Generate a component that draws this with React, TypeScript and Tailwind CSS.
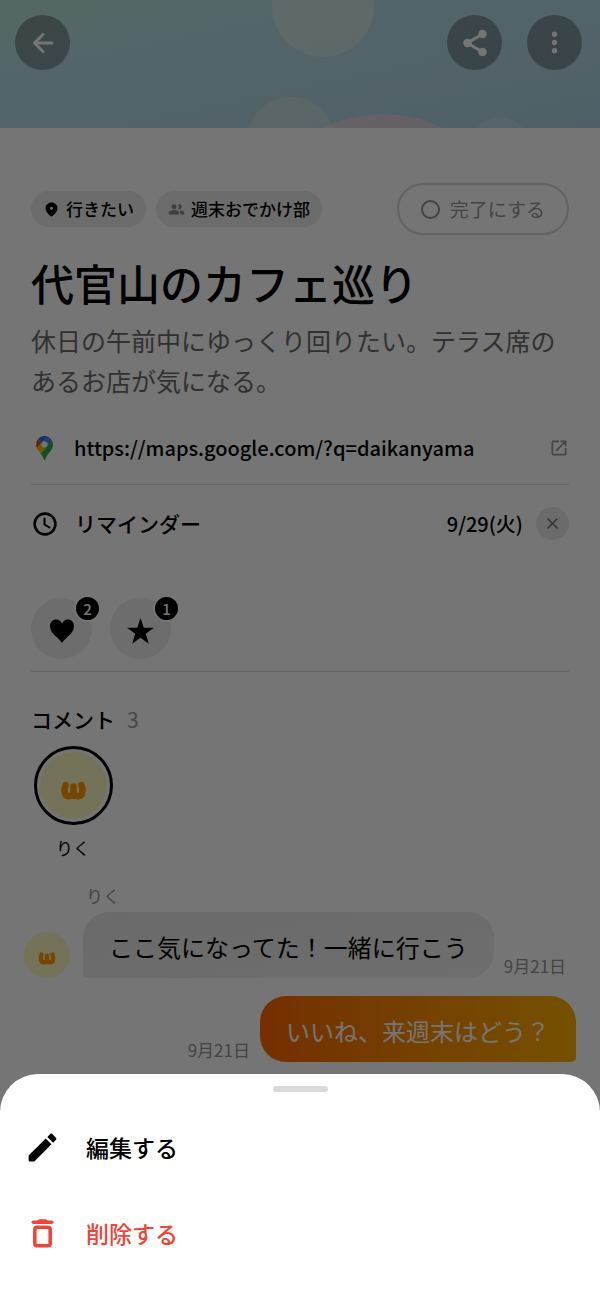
import { ReactNode } from "react";
import { MdClose, MdMoreVert, MdOpenInNew } from "react-icons/md";

const URL = "https://maps.google.com/?q=daikanyama";

function CircleButton({ label, children }: { label: string; children: ReactNode }) {
  return (
    <button
      aria-label={label}
      className="flex size-[55px] items-center justify-center rounded-full bg-black/30 text-white"
    >
      {children}
    </button>
  );
}

function ShareIcon() {
  return (
    <svg width="30" height="30" viewBox="0 0 30 30" fill="currentColor" aria-hidden="true">
      <path d="M22.500 6L7.500 15l15 9" fill="none" stroke="currentColor" strokeWidth="3" />
      <circle cx="7.500" cy="15" r="4.300" />
      <circle cx="22.500" cy="6" r="4.300" />
      <circle cx="22.500" cy="24" r="4.300" />
    </svg>
  );
}

function Cover() {
  return (
    <header className="relative h-32 overflow-hidden bg-linear-to-br from-[#bae1d9] via-[#b7dde5] via-30% to-[#aed0e1]">
      <svg
        className="absolute inset-0 h-full w-full"
        viewBox="0 0 600 128"
        preserveAspectRatio="xMidYMid slice"
        aria-hidden="true"
      >
        <circle cx="323" cy="6" r="51" fill="#fff8e8" fillOpacity="0.3" />
        <circle cx="383" cy="249" r="135" fill="#ffd4dc" fillOpacity="0.55" />
        <circle cx="291" cy="141" r="44" fill="#fff8ec" fillOpacity="0.26" />
        <circle cx="500" cy="146" r="29" fill="#f4ecfa" fillOpacity="0.22" />
      </svg>
      <div className="relative flex items-center gap-[25px] pt-[15px] pr-[18px] pl-[15px]">
        <CircleButton label="戻る">
          <svg
            width="30"
            height="30"
            viewBox="0 0 30 30"
            fill="none"
            stroke="currentColor"
            strokeWidth="3"
            strokeLinecap="round"
            strokeLinejoin="round"
          >
            <path d="M24 15H7M15 6.5L6.5 15l8.500 8.500" />
          </svg>
        </CircleButton>
        <div className="flex-1" />
        <CircleButton label="共有">
          <ShareIcon />
        </CircleButton>
        <CircleButton label="メニュー">
          <MdMoreVert size={33} />
        </CircleButton>
      </div>
    </header>
  );
}

function Chip({ icon, children }: { icon: ReactNode; children: ReactNode }) {
  return (
    <span className="flex h-9 items-center gap-1.5 rounded-full bg-[#ebebeb] px-3 text-[17px] font-medium">
      {icon}
      {children}
    </span>
  );
}

function PlaceIcon() {
  return (
    <svg width="17" height="17" viewBox="0 0 24 24" fill="currentColor" aria-hidden="true">
      <path
        fillRule="evenodd"
        d="M12 2c-4.700 0-8.500 3.600-8.500 8.300 0 4.300 3.500 8 7.600 11.400.5.400 1.300.4 1.800 0 4.100-3.400 7.600-7.100 7.600-11.400C20.500 5.600 16.700 2 12 2zm0 6a2.200 2.200 0 1 1 0 4.400A2.200 2.200 0 0 1 12 8z"
      />
    </svg>
  );
}

function PeopleIcon() {
  return (
    <svg width="17" height="17" viewBox="0 0 24 24" fill="#8a8a8a" aria-hidden="true">
      <circle cx="8.500" cy="8" r="3.500" />
      <path d="M14.200 5a3.500 3.500 0 1 1 0 6 4.900 4.900 0 0 0 0-6z" />
      <path d="M1 16.500c0-2.400 4.500-3.700 7.500-3.700s7 1.300 7 3.700v1.500c0 .6-.4 1-1 1H2c-.6 0-1-.4-1-1z" />
      <path d="M16.300 13c2.700.3 6.700 1.500 6.700 3.500V18c0 .6-.4 1-1 1h-4.700v-2.500c0-1.500-.3-2.500-1-3.500z" />
    </svg>
  );
}

function ClockIcon() {
  return (
    <svg
      width="28"
      height="28"
      viewBox="0 0 28 28"
      fill="none"
      stroke="currentColor"
      strokeWidth="2.600"
      strokeLinecap="round"
      strokeLinejoin="round"
      aria-hidden="true"
    >
      <circle cx="14" cy="14" r="10.400" />
      <path d="M13.500 8.500v6l5 3" strokeWidth="2" />
    </svg>
  );
}

function MapsPin() {
  return (
    <svg width="17" height="24" viewBox="0 0 92.3 132.3" aria-hidden="true">
      <circle cx="46" cy="46" r="22" fill="#fff" />
      <path fill="#1a73e8" d="M60.2 2.2C55.8.8 51 0 46.1 0 32 0 19.3 6.4 10.8 16.5l21.8 18.3L60.2 2.2z" />
      <path fill="#ea4335" d="M10.8 16.5C4.1 24.5 0 34.9 0 46.1c0 8.7 1.7 15.7 4.6 22l28-33.3-21.8-18.3z" />
      <path
        fill="#4285f4"
        d="M46.2 28.5c9.8 0 17.7 7.9 17.7 17.7 0 4.3-1.6 8.3-4.2 11.4 0 0 13.9-16.6 27.5-32.7-5.600-10.8-15.3-19-27-22.7L32.6 34.8c3.3-3.8 8.1-6.3 13.6-6.3"
      />
      <path
        fill="#fbbc04"
        d="M46.2 63.8c-9.8 0-17.7-7.9-17.7-17.7 0-4.3 1.5-8.3 4.1-11.3l-28 33.3c4.8 10.6 12.8 19.2 21 29.9l34.1-40.5c-3.3 3.9-8.1 6.3-13.5 6.3"
      />
      <path
        fill="#34a853"
        d="M59.1 109.2c15.4-24.1 33.3-35 33.3-63 0-7.7-1.9-14.9-5.2-21.3L25.6 98c2.6 3.4 5.3 7.3 7.9 11.3 9.4 14.5 6.8 23.1 12.8 23.1s3.4-8.7 12.8-23.2"
      />
    </svg>
  );
}

// Riku's avatar mark, drawn on a square so it scales with the avatar
function RikuFace() {
  return (
    <svg className="h-full w-full rounded-full bg-[#fff9c4]" viewBox="0 0 67 67" aria-hidden="true">
      <path
        d="M25.600 33c-2 5-1.300 11.200 3.200 11.200 3 0 4.700-1.700 4.700-4.200v-5.500M33.500 40c0 2.500 1.700 4.200 4.700 4.200 4.500 0 5.200-6.200 3.200-11.200"
        fill="none"
        stroke="#ff9800"
        strokeWidth="6.500"
        strokeLinecap="round"
        strokeLinejoin="round"
      />
    </svg>
  );
}

function Reaction({ label, count, children }: { label: string; count: number; children: ReactNode }) {
  return (
    <button
      aria-label={label}
      className="relative flex size-[61px] items-center justify-center rounded-full bg-[#ededed]"
    >
      {children}
      <span className="absolute -top-[3px] -right-[9px] flex size-[27px] items-center justify-center rounded-full border-2 border-white bg-black text-[15px] leading-none font-medium text-white">
        {count}
      </span>
    </button>
  );
}

function ActionSheet() {
  return (
    <div
      role="dialog"
      aria-label="操作"
      className="fixed inset-x-0 bottom-0 rounded-t-[38px] bg-white pt-3 pb-6"
    >
      <div className="mx-auto mb-3 h-1.5 w-[55px] rounded-full bg-[#dadada]" />
      <button className="flex h-[86px] w-full items-center gap-[25px] px-6 text-[23px] font-medium">
        <svg width="37" height="37" viewBox="0 0 24 24" fill="currentColor" aria-hidden="true">
          <path d="M3 17.460v3.040c0 .280.220.5.500.5h3.040c.130 0 .260-.050.350-.150L17.810 9.940l-3.750-3.750L3.150 17.100c-.1.100-.150.220-.150.360zM20.710 7.040c.390-.390.390-1.020 0-1.410l-2.340-2.340c-.390-.390-1.020-.390-1.410 0l-1.830 1.830 3.750 3.750 1.830-1.830z" />
        </svg>
        編集する
      </button>
      <button className="flex h-[86px] w-full items-center gap-[25px] px-6 text-[23px] font-medium text-[#f44336]">
        <svg width="37" height="37" viewBox="0 0 24 24" fill="none" aria-hidden="true">
          <rect x="7" y="8" width="10" height="12" rx="1.500" stroke="currentColor" strokeWidth="2.300" />
          <path d="M8.500 4.200c.3-1 .9-1.500 1.800-1.500h3.400c.9 0 1.500.5 1.800 1.500z" fill="currentColor" />
          <path d="M6 4.700h12" stroke="currentColor" strokeWidth="2.200" strokeLinecap="round" />
        </svg>
        削除する
      </button>
    </div>
  );
}

export default function App() {
  return (
    <div className="relative min-h-screen bg-white font-['Noto_Sans_CJK_JP',sans-serif] text-black" lang="ja">
      <Cover />

      <main className="px-[31px] pt-[55px]">
        <div className="flex items-center gap-2.5">
          <Chip icon={<PlaceIcon />}>行きたい</Chip>
          <Chip icon={<PeopleIcon />}>週末おでかけ部</Chip>
          <button className="ml-auto flex h-[52px] items-center gap-2.5 rounded-full border-2 border-[#d6d6d6] px-[22px] text-[19px] leading-6 text-[#949494]">
            <span className="size-[19px] rounded-full border-2 border-current" />
            完了にする
          </button>
        </div>

        <h1 className="mt-[19px] text-[43px] leading-[56px] font-medium">代官山のカフェ巡り</h1>
        <p className="mt-2.5 text-[25px] leading-10 text-[#6b6b6b]">
          休日の午前中にゆっくり回りたい。テラス席のあるお店が気になる。
        </p>

        <a
          href={URL}
          className="mt-3 flex h-[73px] items-center gap-4 border-b border-[#d9d9d9] text-[20px] font-medium"
        >
          <span className="flex w-[27px] justify-center">
            <MapsPin />
          </span>
          <span className="flex-1">{URL}</span>
          <MdOpenInNew size={20} className="text-[#949494]" />
        </a>

        <div className="flex h-[77px] items-center gap-4 text-[21px] font-medium">
          <ClockIcon />
          <span className="flex-1">リマインダー</span>
          <div className="flex items-center gap-[13px]">
            <time className="text-[20px]">9/29(火)</time>
            <button
              aria-label="リマインダーを削除"
              className="flex size-[33px] items-center justify-center rounded-full bg-[#e9e9e9] text-[#757575]"
            >
              <MdClose size={19} />
            </button>
          </div>
        </div>

        <div className="mt-9 flex gap-[18px] border-b border-[#d9d9d9] pb-3">
          <Reaction label="ハート" count={2}>
            <svg width="24" height="24" viewBox="0 0 24 24" className="mt-1" aria-hidden="true">
              <path d="M12 24C9.500 19 0 15 0 7.200 0 3 2.800.5 6.200.5 9 .5 11.200 2.200 12 5 12.800 2.200 15 .5 17.800.5 21.200.5 24 3 24 7.200 24 15 14.500 19 12 24z" />
            </svg>
          </Reaction>
          <Reaction label="スター" count={1}>
            <svg width="27" height="26" viewBox="0 0 26 25" className="mt-1" aria-hidden="true">
              <path d="M13 0l3.100 9.400H26l-8 5.800 3 9.600-8-5.900-8 5.900 3-9.600-8-5.800h9.900z" />
            </svg>
          </Reaction>
        </div>

        <h2 className="mt-[31px] flex gap-3 text-[21px] leading-8 font-medium">
          コメント
          <span className="font-normal text-[#999]">3</span>
        </h2>
        <div className="mt-[11px] flex">
          <button className="flex w-[84px] flex-col items-center gap-[11px] text-[17px] leading-6">
            <span className="size-[79px] rounded-full border-[3px] border-black p-[3px]">
              <RikuFace />
            </span>
            りく
          </button>
        </div>
      </main>

      <section aria-label="メッセージ" className="mt-6 px-6 pb-60">
        <div className="ml-[62px] text-[17px] leading-6 text-[#949494]">りく</div>
        <div className="mt-1 flex items-end">
          <div className="size-[46px]">
            <RikuFace />
          </div>
          <p className="ml-[13px] rounded-[26px] rounded-bl-[5px] bg-linear-to-br from-[#e8e8e8] to-[#efefef] px-[26px] pt-[17px] pb-[13px] text-[24px] leading-9">
            ここ気になってた！一緒に行こう
          </p>
          <time className="ml-2.5 text-[17px] leading-6 text-[#949494]">9月21日</time>
        </div>
        <div className="mt-[18px] flex items-end justify-end">
          <time className="mr-2.5 text-[17px] leading-6 text-[#949494]">9月21日</time>
          <p className="rounded-[26px] rounded-br-[5px] bg-linear-to-r from-[#ff6600] to-[#ffb000] px-[26px] pt-[17px] pb-[13px] text-[24px] leading-9 text-white">
            いいね、来週末はどう？
          </p>
        </div>
      </section>

      <div className="absolute inset-0 bg-black/54" />
      <ActionSheet />
    </div>
  );
}
